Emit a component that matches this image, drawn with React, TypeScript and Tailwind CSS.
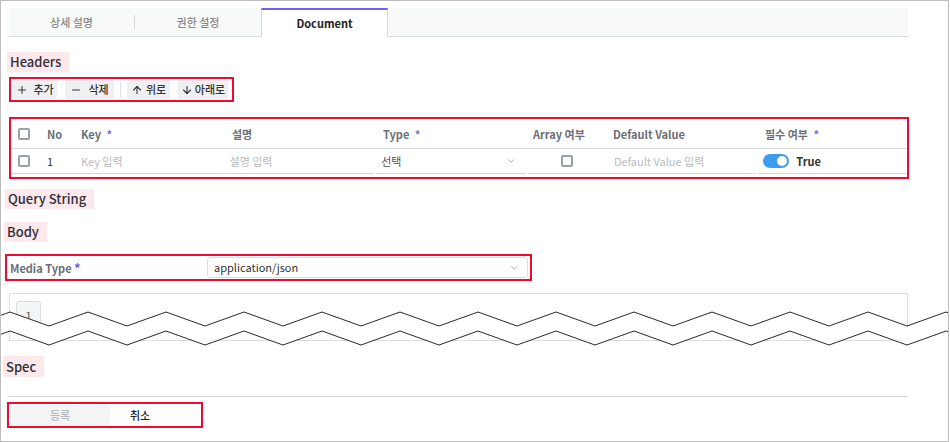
import React from "react";
import { Plus, Minus, ArrowUp, ArrowDown, ChevronDown } from "lucide-react";

function Label({ text, ml, h = "h-[20px] leading-[20px]" }: { text: string; ml: string; h?: string }) {
  return (
    <div className={`flex ${ml}`}>
      <div className={`${h} pl-[3px] pr-[8px] bg-[#fde8eb] text-[13px] font-medium text-[#2f2f3a]`}>
        {text}
      </div>
    </div>
  );
}

function Check() {
  return <div className="w-[12px] h-[12px] border-2 border-[#9aa0a8] rounded-[2px] bg-white" />;
}

function Zigzag() {
  const pts = (dy: number) => {
    const arr: string[] = [];
    for (let k = -1; k < 14; k++) {
      const px = 9 + 78 * k;
      arr.push(`${px - 39},${325 + dy}`);
      arr.push(`${px},${311 + dy}`);
    }
    return arr;
  };
  const top = pts(0);
  const bot = pts(19);
  const poly = [...top, ...bot.slice().reverse()].join(" ");
  return (
    <svg className="absolute left-0 top-0 pointer-events-none" width="950" height="442" viewBox="0 0 950 442">
      <polygon points={poly} fill="#ffffff" />
      <polyline points={top.join(" ")} fill="none" stroke="#2a2a2a" strokeWidth="1" />
      <polyline points={bot.join(" ")} fill="none" stroke="#2a2a2a" strokeWidth="1" />
    </svg>
  );
}

export default function App() {
  return (
    <div className="relative w-[949px] h-[442px] border border-[#bdbdbd] bg-white overflow-hidden font-['Noto_Sans_CJK_KR','Noto_Sans',sans-serif] text-[11px] text-[#333]">
      {/* Tabs */}
      <div className="ml-[8px] mt-[7px] w-[899px] h-[29px] bg-[#f8f9f9] border-b border-[#d8dade] flex items-stretch">
        <div className="w-[125px] flex items-center justify-center text-[#888] font-medium">상세 설명</div>
        <div className="w-px h-[14px] bg-[#d6d8dc] self-center" />
        <div className="w-[126px] flex items-center justify-center text-[#888] font-medium">권한 설정</div>
        <div className="w-[127px] h-[29px] bg-white border-t-2 border-t-[#7b5cf0] border-x border-x-[#d8dade] flex items-center justify-center font-bold text-[#222]">
          Document
        </div>
      </div>

      {/* Headers */}
      <div className="mt-[15px]">
        <Label text="Headers" ml="ml-[6px]" />
      </div>
      <div className="ml-[8px] mt-[5px] w-[225px] h-[25px] border-2 border-[#ee0a32] flex items-center pl-[2px] gap-[8px]">
        <div className="w-[44px] h-[19px] bg-[#eef0f2] rounded-[2px] flex items-center justify-center gap-[5px] font-medium text-[#333]">
          <Plus size={12} strokeWidth={2} />
          <span>추가</span>
        </div>
        <div className="w-[49px] h-[19px] bg-[#eef0f2] rounded-[2px] flex items-center justify-center gap-[6px] font-medium text-[#333]">
          <Minus size={12} strokeWidth={2} />
          <span>삭제</span>
        </div>
        <div className="w-px h-[16px] bg-[#dde0e4] mx-[-2px]" />
        <div className="w-[43px] h-[19px] bg-[#eef0f2] rounded-[2px] flex items-center justify-center gap-[3px] font-medium text-[#333]">
          <ArrowUp size={12} strokeWidth={2.2} />
          <span>위로</span>
        </div>
        <div className="w-[50px] h-[19px] bg-[#eef0f2] rounded-[2px] flex items-center justify-center gap-[2px] font-medium text-[#333]">
          <ArrowDown size={12} strokeWidth={2.2} />
          <span>아래로</span>
        </div>
      </div>

      {/* Table */}
      <div className="ml-[8px] mt-[15px] w-[900px] h-[62px] border-2 border-[#ee0a32] pt-px">
        <div className="flex items-center h-[29px] border-b border-[#d6d8dc] font-bold text-[#6b6f78]">
          <div className="w-[30px] pl-[7px] flex"><Check /></div>
          <div className="w-[32px] pl-[6px]">No</div>
          <div className="w-[152px] pl-[8px]">Key <span className="text-[#7466f0] ml-[3px]">*</span></div>
          <div className="w-[151px] pl-[7px]">설명</div>
          <div className="w-[151px] pl-[7px]">Type <span className="text-[#7466f0] ml-[3px]">*</span></div>
          <div className="w-[79px] pl-[6px]">Array 여부</div>
          <div className="w-[151px] pl-[7px]">Default Value</div>
          <div className="w-[150px] pl-[8px]">필수 여부 <span className="text-[#7466f0] ml-[3px]">*</span></div>
        </div>
        <div className="flex items-stretch h-[25px]">
          <div className="w-[212px] border-b border-[#d6d8dc] flex items-center">
            <div className="w-[30px] pl-[7px] flex"><Check /></div>
            <div className="w-[32px] pl-[6px] text-[#333]">1</div>
            <div className="pl-[8px] text-[#b8bbc0]">Key 입력</div>
          </div>
          <div className="w-[150px] ml-[2px] border-b border-[#d6d8dc] flex items-center pl-[5px] text-[#b8bbc0]">설명 입력</div>
          <div className="w-[150px] ml-[2px] border-b border-[#d6d8dc] flex items-center justify-between pl-[5px] pr-[10px] text-[#555]">
            <span>선택</span>
            <ChevronDown size={10} strokeWidth={1.5} className="text-[#777]" />
          </div>
          <div className="w-[229px] ml-[2px] border-b border-[#d6d8dc] flex items-center">
            <div className="w-[78px] flex justify-center"><Check /></div>
            <div className="pl-[8px] text-[#b8bbc0]">Default Value 입력</div>
          </div>
          <div className="w-[149px] ml-[2px] border-b border-[#d6d8dc] flex items-center pl-[5px] gap-[7px]">
            <div className="w-[26px] h-[14px] rounded-full bg-[#3d9cf0] flex items-center justify-end pr-[2px]">
              <div className="w-[10px] h-[10px] rounded-full bg-white" />
            </div>
            <span className="font-bold text-[#333]">True</span>
          </div>
        </div>
      </div>

      {/* Query String */}
      <div className="mt-[10px]">
        <Label text="Query String" ml="ml-[4px]" />
      </div>

      {/* Body */}
      <div className="mt-[13px]">
        <Label text="Body" ml="ml-[3px]" />
      </div>
      <div className="ml-[4px] mt-[12px] w-[527px] h-[27px] border-2 border-[#ee0a32] flex items-center">
        <div className="w-[200px] pl-[3px] font-bold text-[#6b6f78]">
          Media Type <span className="text-[#6a5cf5] text-[13px]">*</span>
        </div>
        <div className="w-[321px] h-[21px] border border-[#dcdde0] rounded-[3px] flex items-center justify-between pl-[6px] pr-[8px] text-[#333]">
          <span>application/json</span>
          <ChevronDown size={10} strokeWidth={1.5} className="text-[#777]" />
        </div>
      </div>

      {/* Editor */}
      <div className="ml-[8px] mt-[12px] w-[899px] h-[48px] border border-[#dcdde0] pt-[7px] pl-[6px]">
        <div className="w-[25px] h-[30px] bg-[#f4f5f6] border border-[#dcdde0] rounded-t-[3px] flex justify-center pt-[5px] text-[#555]">1</div>
      </div>

      {/* Spec */}
      <div className="mt-[15px]">
        <Label text="Spec" ml="ml-[2px]" h="h-[21px] leading-[21px]" />
      </div>
      <div className="ml-[8px] mt-[19px] w-[899px] h-px bg-[#d4d4d4]" />
      <div className="ml-[6px] mt-[5px] w-[196px] h-[26px] border-2 border-[#ee0a32] flex items-center pl-[1px]">
        <div className="w-[100px] h-[20px] bg-[#f3f4f6] rounded-[3px] flex items-center justify-center text-[#b5b8bd] font-medium">등록</div>
        <div className="w-[60px] flex items-center justify-center text-[#222] font-medium">취소</div>
      </div>

      <Zigzag />
    </div>
  );
}
